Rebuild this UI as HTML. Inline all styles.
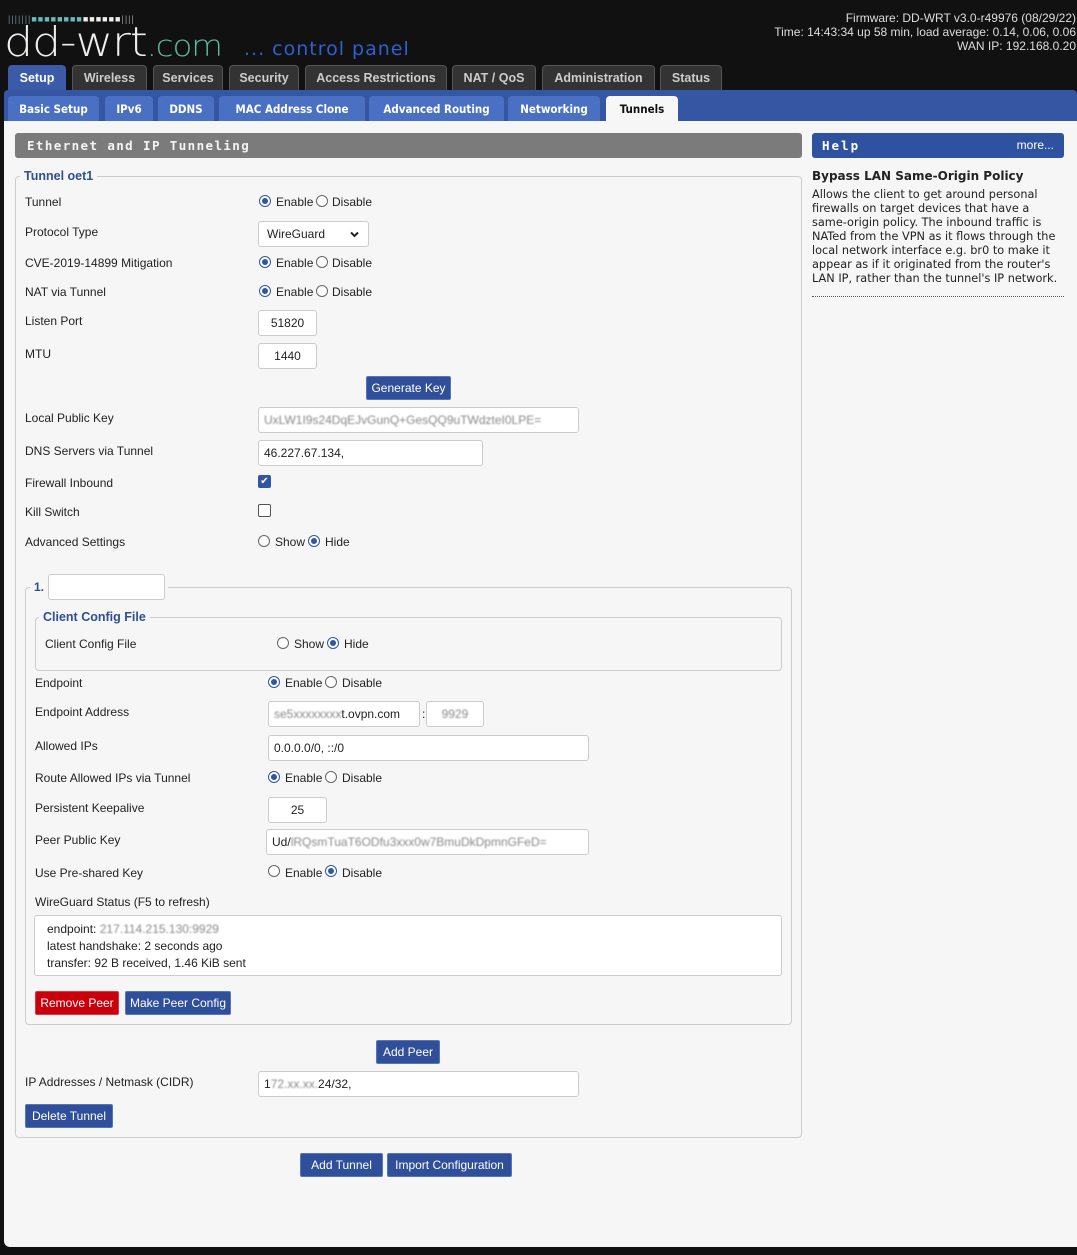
<!DOCTYPE html>
<html><head><meta charset="utf-8"><style>
*{box-sizing:border-box;margin:0;padding:0}
body{width:1077px;height:1255px;background:#111;font-family:"Liberation Sans",sans-serif;font-size:12px;color:#222;position:relative;overflow:hidden}
.a{position:absolute;white-space:nowrap}
.tab{position:absolute;top:65px;height:26px;background:#333;border:1px solid #555;border-bottom:none;border-radius:4px 4px 0 0;color:#ccc;font-weight:bold;font-size:12.5px;text-align:center;line-height:25px}
.st{position:absolute;top:96px;height:25px;background:#4a70c4;border-radius:4px 4px 0 0;color:#fff;font-weight:bold;text-align:center;line-height:26px;font-family:"DejaVu Sans Condensed","Liberation Sans",sans-serif;font-size:11.5px}
.lbl{position:absolute;left:25px;font-size:12px;color:#222}
.r{position:absolute;width:12px;height:12px;border:1px solid #666;border-radius:50%;background:#fff}
.r.on{border-color:#2f55a4}
.r.on::after{content:"";position:absolute;left:2px;top:2px;width:6px;height:6px;border-radius:50%;background:#2f55a4}
.in{position:absolute;height:26px;background:#fff;border:1px solid #ccc;border-radius:3px;font-size:12px;line-height:24px;padding-left:5px;color:#222}
.btn{position:absolute;height:24px;background:#2f4f9a;border:1px solid #5775b8;border-radius:2px;color:#fff;font-size:12px;line-height:22px;text-align:center}
.blur{color:#888;filter:blur(0.8px)}
</style></head><body>
<!-- header -->
<div class="a" style="left:8px;top:14px;font-size:9px;letter-spacing:1px;color:#8aa">
<span style="color:#689">|||||||</span><span style="color:#6bb">■■■■■■■■</span><span style="color:#eee">■■■■■■</span><span style="color:#999">||||</span></div>
<div class="a" style="left:4px;top:20px;font-size:41px;color:#eee;letter-spacing:-1px;font-family:'DejaVu Sans',sans-serif;font-weight:200;line-height:44px;transform:scaleX(1.12);transform-origin:left">dd-wrt<span style="color:#5fb8a0;font-size:29px">.com</span></div>
<div class="a" style="left:244px;top:37px;font-size:19px;color:#2f5fd0;font-family:'DejaVu Sans',sans-serif;line-height:24px;letter-spacing:1px">... control panel</div>
<div class="a" style="right:1px;top:11px;text-align:right;color:#ddd;font-size:12px;line-height:14px">Firmware: DD-WRT v3.0-r49976 (08/29/22)<br>Time: 14:43:34 up 58 min, load average: 0.14, 0.06, 0.06<br>WAN IP: 192.168.0.20</div>

<div class="tab" style="left:8px;width:58px;background:#3b5ba8;border-color:#3b5ba8;color:#fff">Setup</div>
<div class="tab" style="left:72px;width:75px">Wireless</div>
<div class="tab" style="left:153px;width:70px">Services</div>
<div class="tab" style="left:229px;width:70px">Security</div>
<div class="tab" style="left:305px;width:142px">Access Restrictions</div>
<div class="tab" style="left:452px;width:84px">NAT / QoS</div>
<div class="tab" style="left:542px;width:113px">Administration</div>
<div class="tab" style="left:660px;width:62px">Status</div>

<div class="a" style="left:4px;top:90px;width:1073px;height:32px;background:#3556a2;border-radius:4px 4px 0 0"></div>
<div class="st" style="left:8px;width:91px">Basic Setup</div>
<div class="st" style="left:105px;width:48px">IPv6</div>
<div class="st" style="left:158px;width:56px">DDNS</div>
<div class="st" style="left:219px;width:146px">MAC Address Clone</div>
<div class="st" style="left:369px;width:135px">Advanced Routing</div>
<div class="st" style="left:508px;width:92px">Networking</div>
<div class="st" style="left:606px;width:72px;background:#f7f7f7;color:#111">Tunnels</div>

<div class="a" style="left:4px;top:121px;width:1073px;height:1126px;background:#f6f6f6;border-radius:0 0 0 6px"></div>

<div class="a" style="left:15px;top:133px;width:787px;height:25px;background:#7b7b7b;border-radius:3px;color:#f4f4f4;font-family:'DejaVu Sans Mono',monospace;font-weight:bold;font-size:12.5px;letter-spacing:1.4px;line-height:25px;padding-left:12px">Ethernet and IP Tunneling</div>
<div class="a" style="left:812px;top:133px;width:252px;height:25px;background:#2f52a0;border-radius:3px;color:#fff;line-height:25px;padding:0 10px"><b style="font-family:'DejaVu Sans Mono',monospace;letter-spacing:2px;font-size:12.5px">Help</b><span style="float:right">more...</span></div>
<div class="a" style="left:812px;top:169px;font-weight:bold;font-size:12px;font-family:'DejaVu Sans',sans-serif">Bypass LAN Same-Origin Policy</div>
<div class="a" style="left:812px;top:188px;width:254px;white-space:normal;font-size:11.3px;line-height:14px;font-family:'DejaVu Sans',sans-serif">Allows the client to get around personal firewalls on target devices that have a same-origin policy. The inbound traffic is NATed from the VPN as it flows through the local network interface e.g. br0 to make it appear as if it originated from the router's LAN IP, rather than the tunnel's IP network.</div>
<div class="a" style="left:812px;top:296px;width:252px;border-top:1px dotted #555"></div>

<!-- main fieldset -->
<div class="a" style="left:15px;top:176px;width:787px;height:962px;border:1px solid #ccc;border-radius:4px"></div>
<div class="a" style="left:20px;top:169px;background:#f6f6f6;padding:0 4px;color:#2f4f90;font-weight:bold;font-size:12.5px">Tunnel oet1</div>

<div class="lbl" style="top:195px">Tunnel</div>
<div class="r on" style="left:259px;top:195px"></div><div class="a" style="left:276px;top:195px">Enable</div>
<div class="r" style="left:316px;top:195px"></div><div class="a" style="left:332px;top:195px">Disable</div>

<div class="lbl" style="top:225px">Protocol Type</div>
<div class="in" style="left:258px;top:221px;width:111px;padding-left:8px">WireGuard<svg style="position:absolute;right:9px;top:9px" width="9" height="7" viewBox="0 0 9 7"><path d="M1 1.5 L4.5 5 L8 1.5" stroke="#222" stroke-width="2" fill="none"/></svg></div>

<div class="lbl" style="top:256px">CVE-2019-14899 Mitigation</div>
<div class="r on" style="left:259px;top:256px"></div><div class="a" style="left:276px;top:256px">Enable</div>
<div class="r" style="left:316px;top:256px"></div><div class="a" style="left:332px;top:256px">Disable</div>

<div class="lbl" style="top:285px">NAT via Tunnel</div>
<div class="r on" style="left:259px;top:285px"></div><div class="a" style="left:276px;top:285px">Enable</div>
<div class="r" style="left:316px;top:285px"></div><div class="a" style="left:332px;top:285px">Disable</div>

<div class="lbl" style="top:314px">Listen Port</div>
<div class="in" style="left:258px;top:310px;width:59px;text-align:center;padding:0">51820</div>
<div class="lbl" style="top:347px">MTU</div>
<div class="in" style="left:258px;top:343px;width:59px;text-align:center;padding:0">1440</div>
<div class="btn" style="left:366px;top:376px;width:85px">Generate Key</div>

<div class="lbl" style="top:411px">Local Public Key</div>
<div class="in" style="left:258px;top:407px;width:321px"><span class="blur">UxLW1I9s24DqEJvGunQ+GesQQ9uTWdzteI0LPE=</span></div>
<div class="lbl" style="top:444px">DNS Servers via Tunnel</div>
<div class="in" style="left:258px;top:440px;width:225px">46.227.67.134,</div>
<div class="lbl" style="top:476px">Firewall Inbound</div>
<div class="a" style="left:258px;top:475px;width:13px;height:13px;background:#2f55a4;border-radius:2px;color:#fff;font-size:10px;line-height:13px;text-align:center">&#10004;</div>
<div class="lbl" style="top:505px">Kill Switch</div>
<div class="a" style="left:258px;top:504px;width:13px;height:13px;border:1px solid #555;border-radius:2px;background:#fff"></div>
<div class="lbl" style="top:535px">Advanced Settings</div>
<div class="r" style="left:258px;top:535px"></div><div class="a" style="left:275px;top:535px">Show</div>
<div class="r on" style="left:308px;top:535px"></div><div class="a" style="left:325px;top:535px">Hide</div>

<!-- peer fieldset -->
<div class="a" style="left:25px;top:587px;width:767px;height:438px;border:1px solid #ccc;border-radius:4px"></div>
<div class="a" style="left:30px;top:574px;background:#f6f6f6;padding:0 4px;height:28px;width:138px"></div>
<div class="a" style="left:34px;top:580px;color:#2f4f90;font-weight:bold">1.</div>
<div class="in" style="left:48px;top:574px;width:117px"></div>

<div class="a" style="left:35px;top:617px;width:747px;height:54px;border:1px solid #ccc;border-radius:4px"></div>
<div class="a" style="left:39px;top:610px;background:#f6f6f6;padding:0 4px;color:#2f4f90;font-weight:bold;font-size:12.5px">Client Config File</div>
<div class="a" style="left:45px;top:637px">Client Config File</div>
<div class="r" style="left:277px;top:637px"></div><div class="a" style="left:294px;top:637px">Show</div>
<div class="r on" style="left:327px;top:637px"></div><div class="a" style="left:344px;top:637px">Hide</div>

<div class="a" style="left:35px;top:676px">Endpoint</div>
<div class="r on" style="left:268px;top:676px"></div><div class="a" style="left:285px;top:676px">Enable</div>
<div class="r" style="left:325px;top:676px"></div><div class="a" style="left:342px;top:676px">Disable</div>

<div class="a" style="left:35px;top:705px">Endpoint Address</div>
<div class="in" style="left:268px;top:701px;width:152px"><span class="blur">se5xxxxxxxx</span>t.ovpn.com</div>
<div class="a" style="left:422px;top:707px">:</div>
<div class="in" style="left:426px;top:701px;width:58px;text-align:center;padding:0"><span class="blur">9929</span></div>

<div class="a" style="left:35px;top:739px">Allowed IPs</div>
<div class="in" style="left:268px;top:735px;width:321px">0.0.0.0/0, ::/0</div>

<div class="a" style="left:35px;top:771px">Route Allowed IPs via Tunnel</div>
<div class="r on" style="left:268px;top:771px"></div><div class="a" style="left:285px;top:771px">Enable</div>
<div class="r" style="left:325px;top:771px"></div><div class="a" style="left:342px;top:771px">Disable</div>

<div class="a" style="left:35px;top:801px">Persistent Keepalive</div>
<div class="in" style="left:268px;top:797px;width:59px;text-align:center;padding:0">25</div>

<div class="a" style="left:35px;top:833px">Peer Public Key</div>
<div class="in" style="left:266px;top:829px;width:323px">Ud/<span class="blur">lRQsmTuaT6ODfu3xxx0w7BmuDkDpmnGFeD=</span></div>

<div class="a" style="left:35px;top:866px">Use Pre-shared Key</div>
<div class="r" style="left:268px;top:865px"></div><div class="a" style="left:285px;top:866px">Enable</div>
<div class="r on" style="left:325px;top:865px"></div><div class="a" style="left:342px;top:866px">Disable</div>

<div class="a" style="left:35px;top:895px">WireGuard Status (F5 to refresh)</div>
<div class="a" style="left:34px;top:915px;width:748px;height:61px;background:#fff;border:1px solid #ccc;border-radius:3px;padding:5px 12px;line-height:17px;white-space:normal">endpoint: <span class="blur">217.114.215.130:9929</span><br>latest handshake: 2 seconds ago<br>transfer: 92 B received, 1.46 KiB sent</div>

<div class="btn" style="left:35px;top:991px;width:84px;background:#c9000c;border-color:#d83a40">Remove Peer</div>
<div class="btn" style="left:125px;top:991px;width:106px">Make Peer Config</div>

<div class="btn" style="left:376px;top:1040px;width:64px">Add Peer</div>
<div class="lbl" style="top:1075px">IP Addresses / Netmask (CIDR)</div>
<div class="in" style="left:258px;top:1071px;width:321px">1<span class="blur">72.xx.xx.</span>24/32,</div>
<div class="btn" style="left:25px;top:1104px;width:88px">Delete Tunnel</div>

<div class="btn" style="left:300px;top:1153px;width:83px">Add Tunnel</div>
<div class="btn" style="left:387px;top:1153px;width:125px">Import Configuration</div>
</body></html>
